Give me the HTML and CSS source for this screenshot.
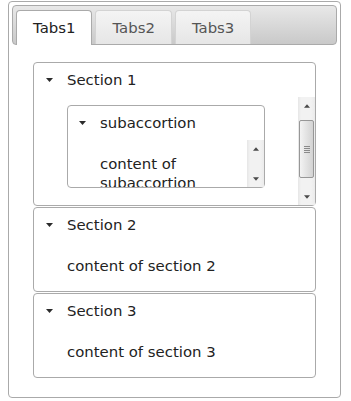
FILE: index.html
```html
<!DOCTYPE html>
<html>
<head>
<meta charset="utf-8">
<link rel="stylesheet" href="styles.css">
</head>
<body>
<div class="tabs">
  <ul class="tab-nav">
    <li class="tab active">Tabs1</li>
    <li class="tab">Tabs2</li>
    <li class="tab">Tabs3</li>
  </ul>
  <div class="tab-panel">
    <div class="accordion">
      <div class="sec sec-first">
        <div class="hdr"><svg class="tri" width="7" height="4" viewBox="0 0 7 4"><polygon points="0,0 7,0 3.5,4" /></svg><span>Section 1</span></div>
        <div class="scroll-body outer-body">
          <div class="scroll-content outer-content">
            <div class="sec sub">
              <div class="hdr"><svg class="tri" width="7" height="4" viewBox="0 0 7 4"><polygon points="0,0 7,0 3.5,4" /></svg><span>subaccortion</span></div>
              <div class="scroll-body sub-body">
                <div class="scroll-content sub-content">content of subaccortion</div>
                <div class="sbar">
                  <div class="sbtn"><svg width="7" height="4" viewBox="0 0 7 4"><polygon points="0,4 7,4 3.5,0" /></svg></div>
                  <div class="track"></div>
                  <div class="sbtn"><svg width="7" height="4" viewBox="0 0 7 4"><polygon points="0,0 7,0 3.5,4" /></svg></div>
                </div>
              </div>
            </div>
          </div>
          <div class="sbar">
            <div class="sbtn"><svg width="7" height="4" viewBox="0 0 7 4"><polygon points="0,4 7,4 3.5,0" /></svg></div>
            <div class="track">
              <div class="thumb"><span class="grip"></span><span class="grip"></span><span class="grip"></span><span class="grip"></span></div>
            </div>
            <div class="sbtn"><svg width="7" height="4" viewBox="0 0 7 4"><polygon points="0,0 7,0 3.5,4" /></svg></div>
          </div>
        </div>
      </div>
      <div class="sec">
        <div class="hdr"><svg class="tri" width="7" height="4" viewBox="0 0 7 4"><polygon points="0,0 7,0 3.5,4" /></svg><span>Section 2</span></div>
        <div class="body">content of section 2</div>
      </div>
      <div class="sec">
        <div class="hdr"><svg class="tri" width="7" height="4" viewBox="0 0 7 4"><polygon points="0,0 7,0 3.5,4" /></svg><span>Section 3</span></div>
        <div class="body">content of section 3</div>
      </div>
    </div>
  </div>
</div>
</body>
</html>
```
FILE: styles.css
```css
* { box-sizing: border-box; }
html, body { background: #fff; }
body {
  margin: 0;
  font-family: "DejaVu Sans", Verdana, sans-serif;
  font-size: 14.9px;
  color: #222;
}
.tabs {
  margin: 1px 0 0 8px;
  width: 333px;
  height: 397px;
  border: 1px solid #aaa;
  border-radius: 4px;
  padding: 3px;
}
.tab-nav {
  list-style: none;
  margin: 0;
  height: 40px;
  padding: 4px 3px 0;
  border: 1px solid #aaa;
  border-radius: 4px;
  background: linear-gradient(#e8e8e8, #c9c9c9);
  display: flex;
  gap: 3px;
  align-items: flex-start;
}
.tab {
  height: 34px;
  line-height: 34px;
  padding: 0 16px;
  border: 1px solid #d3d3d3;
  border-bottom: 0;
  border-radius: 4px 4px 0 0;
  background: linear-gradient(#f4f4f4, #e6e6e6);
  color: #555;
}
.tab.active {
  height: 35px;
  margin-bottom: -1px;
  background: #fff;
  border-color: #aaa;
  color: #212121;
}
.tab-panel {
  padding: 17px 21px 0;
}
.accordion {
  display: flex;
  flex-direction: column;
  gap: 1px;
}
.sec {
  border: 1px solid #aaa;
  border-radius: 4px;
  background: #fff;
}
.hdr {
  height: 34px;
  display: flex;
  align-items: center;
  padding-left: 12px;
  line-height: 19px;
}
.tri {
  fill: #2b2b2b;
  margin-right: 14px;
  flex: none;
}
.body {
  padding: 15px 33px;
  line-height: 19px;
  height: 49px;
}
.scroll-body {
  display: flex;
  overflow: hidden;
}
.outer-body { height: 108px; }
.scroll-content {
  flex: 1;
  min-width: 0;
  overflow: hidden;
}
.outer-content {
  padding: 8px 33px 0;
}
.sub .hdr { padding-left: 11px; }
.sub .tri { margin-right: 14px; }
.sub-body { height: 47px; }
.sub-content {
  padding: 15px 33px 0 32px;
  line-height: 19px;
}
.sbar {
  flex: none;
  width: 17px;
  display: flex;
  flex-direction: column;
  background: linear-gradient(to right, #e6e6e6, #f2f2f2 3px, #f2f2f2 13px, #ebebeb);
}
.sbtn {
  height: 17px;
  flex: none;
  display: flex;
  align-items: center;
  justify-content: center;
}
.sbtn svg { fill: #4a4a4a; width: 6px; height: 4px; }
.track { flex: 1; }
.thumb {
  margin: 6px 1px 0 1px;
  height: 58px;
  border: 1px solid #979797;
  border-radius: 2px;
  background: linear-gradient(to right, #f3f3f3, #e4e4e4 45%, #d3d3d3);
  display: flex;
  flex-direction: column;
  align-items: center;
  justify-content: center;
  gap: 1px;
}
.grip {
  width: 6px;
  height: 1px;
  background: #8a8a8a;
}
```
